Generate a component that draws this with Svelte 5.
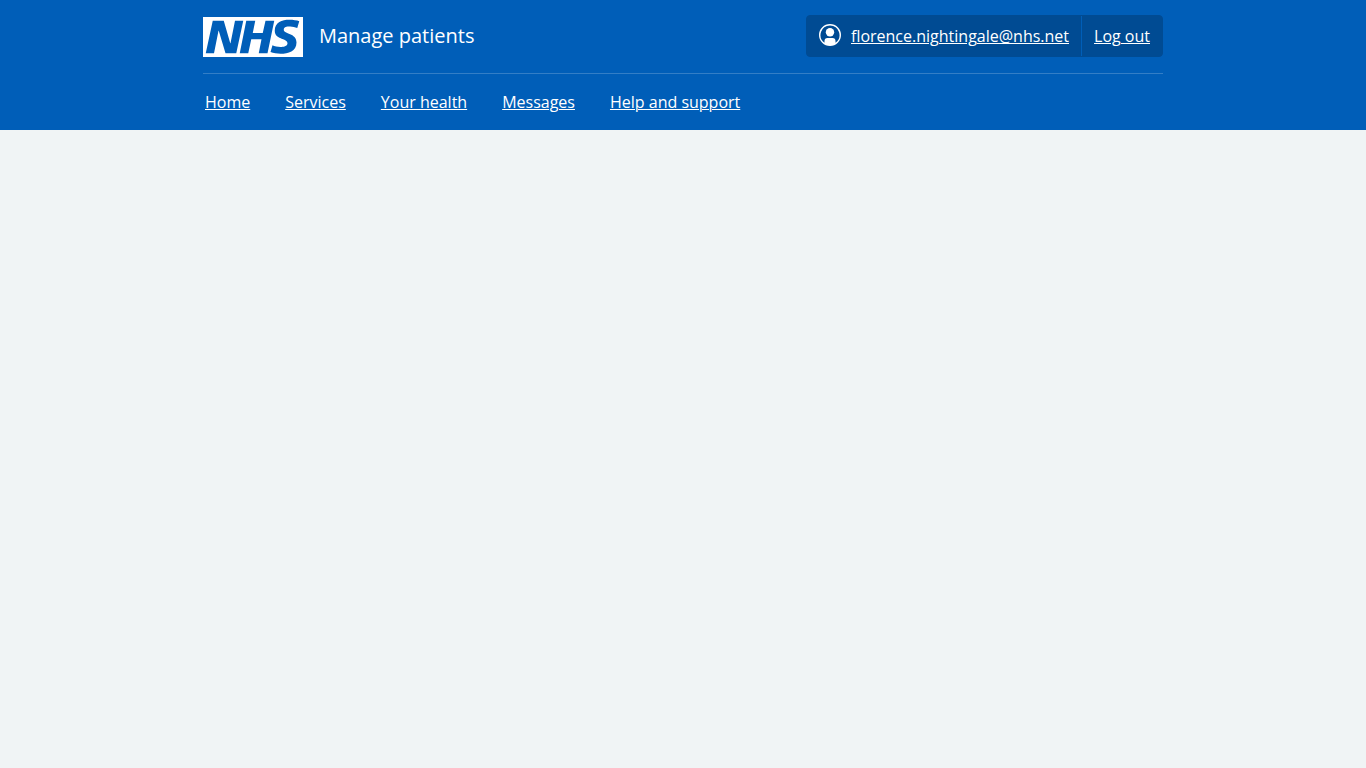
<script>
  const links = ['Home', 'Services', 'Your health', 'Messages', 'Help and support'];
</script>

<header class="header">
  <div class="container">
    <div class="top">
      <a class="service" href="#home">
        <svg class="logo" viewBox="0 0 200 80" role="img" aria-label="NHS">
          <path fill="currentColor" d="M200 0v80H0V0h200Zm-27.5 5.5c-14.5 0-29 5-29 22 0 10.2 7.7 13.5 14.7 16.3l.7.3c5.4 2 10.1 3.9 10.1 8.4 0 6.5-8.5 7.5-14 7.5s-12.5-1.5-16-3.5L135 70c5.500 2 13.500 3.500 20 3.500 15.500 0 32-4.500 32-22.500 0-19.500-25.500-16.500-25.500-25.500 0-5.500 5.500-6.500 12.500-6.500a35 35 0 0 1 14.500 3l4-13.500c-4.500-2-12-3-20-3Zm-131 2h-22l-14 65H22l9-45h.5l13.500 45h21.500l14-65H64l-9 45h-.5l-13-45Zm63 0h-18l-13 65h17l6-28H117l-5.500 28H129l13.500-65H125L119.500 32h-20l5-24.500Z" />
        </svg>
        <span class="name">Manage patients</span>
      </a>
      <ul class="account">
        <li>
          <svg class="user" viewBox="0 0 24 24" aria-hidden="true">
            <path fill="currentColor" fill-rule="evenodd" d="M11 0a11 11 0 1 1 0 22 11 11 0 0 1 0-22Zm0 1.500a9.500 9.500 0 0 0-5.500 17.200V17a3 3 0 0 1 3-3h5a3 3 0 0 1 3 3v1.700A9.500 9.500 0 0 0 11 1.500Z" />
            <circle cx="11" cy="8.300" r="4.200" fill="currentColor" />
          </svg>
          <a href="#account">florence.nightingale@nhs.net</a>
        </li>
        <li><a href="#logout">Log out</a></li>
      </ul>
    </div>
    <nav aria-label="Menu">
      <ul class="menu">
        {#each links as link}
          <li><a href="#{link.toLowerCase().replaceAll(' ', '-')}">{link}</a></li>
        {/each}
      </ul>
    </nav>
  </div>
</header>

<style>
  :global(body) {
    background: #f0f4f5;
  }
  .header {
    background: #005eb8;
    color: #fff;
    font: 16px/24px "Open Sans", "Noto Sans", sans-serif;
  }
  .container {
    max-width: 960px;
    margin: 0 auto;
  }
  .top {
    display: flex;
    flex-wrap: wrap;
    justify-content: space-between;
    align-items: flex-end;
    gap: 16px;
    padding: 15px 0 16px;
    border-bottom: 1px solid #337ec6;
  }
  a {
    color: inherit;
    text-underline-offset: 1px;
    text-decoration-thickness: 1px;
  }
  .service {
    display: flex;
    align-items: flex-start;
    gap: 16px;
    text-decoration: none;
  }
  .name {
    font-size: 20px;
    line-height: 38px;
  }
  .logo {
    display: block;
    width: 100px;
    height: 40px;
  }
  ul {
    list-style: none;
    display: flex;
    flex-wrap: wrap;
    margin: 0;
    padding: 0;
  }
  .account {
    background: #004b93;
    border: 1px solid #004b93;
    border-radius: 4px;
  }
  .account li {
    display: flex;
    align-items: center;
    gap: 8px;
    padding: 8px 12px;
  }
  .account li + li {
    border-left: 1px solid #005eb8;
  }
  .user {
    width: 24px;
    height: 24px;
  }
  .menu {
    column-gap: 35px;
    padding: 16px 2px;
  }
</style>
